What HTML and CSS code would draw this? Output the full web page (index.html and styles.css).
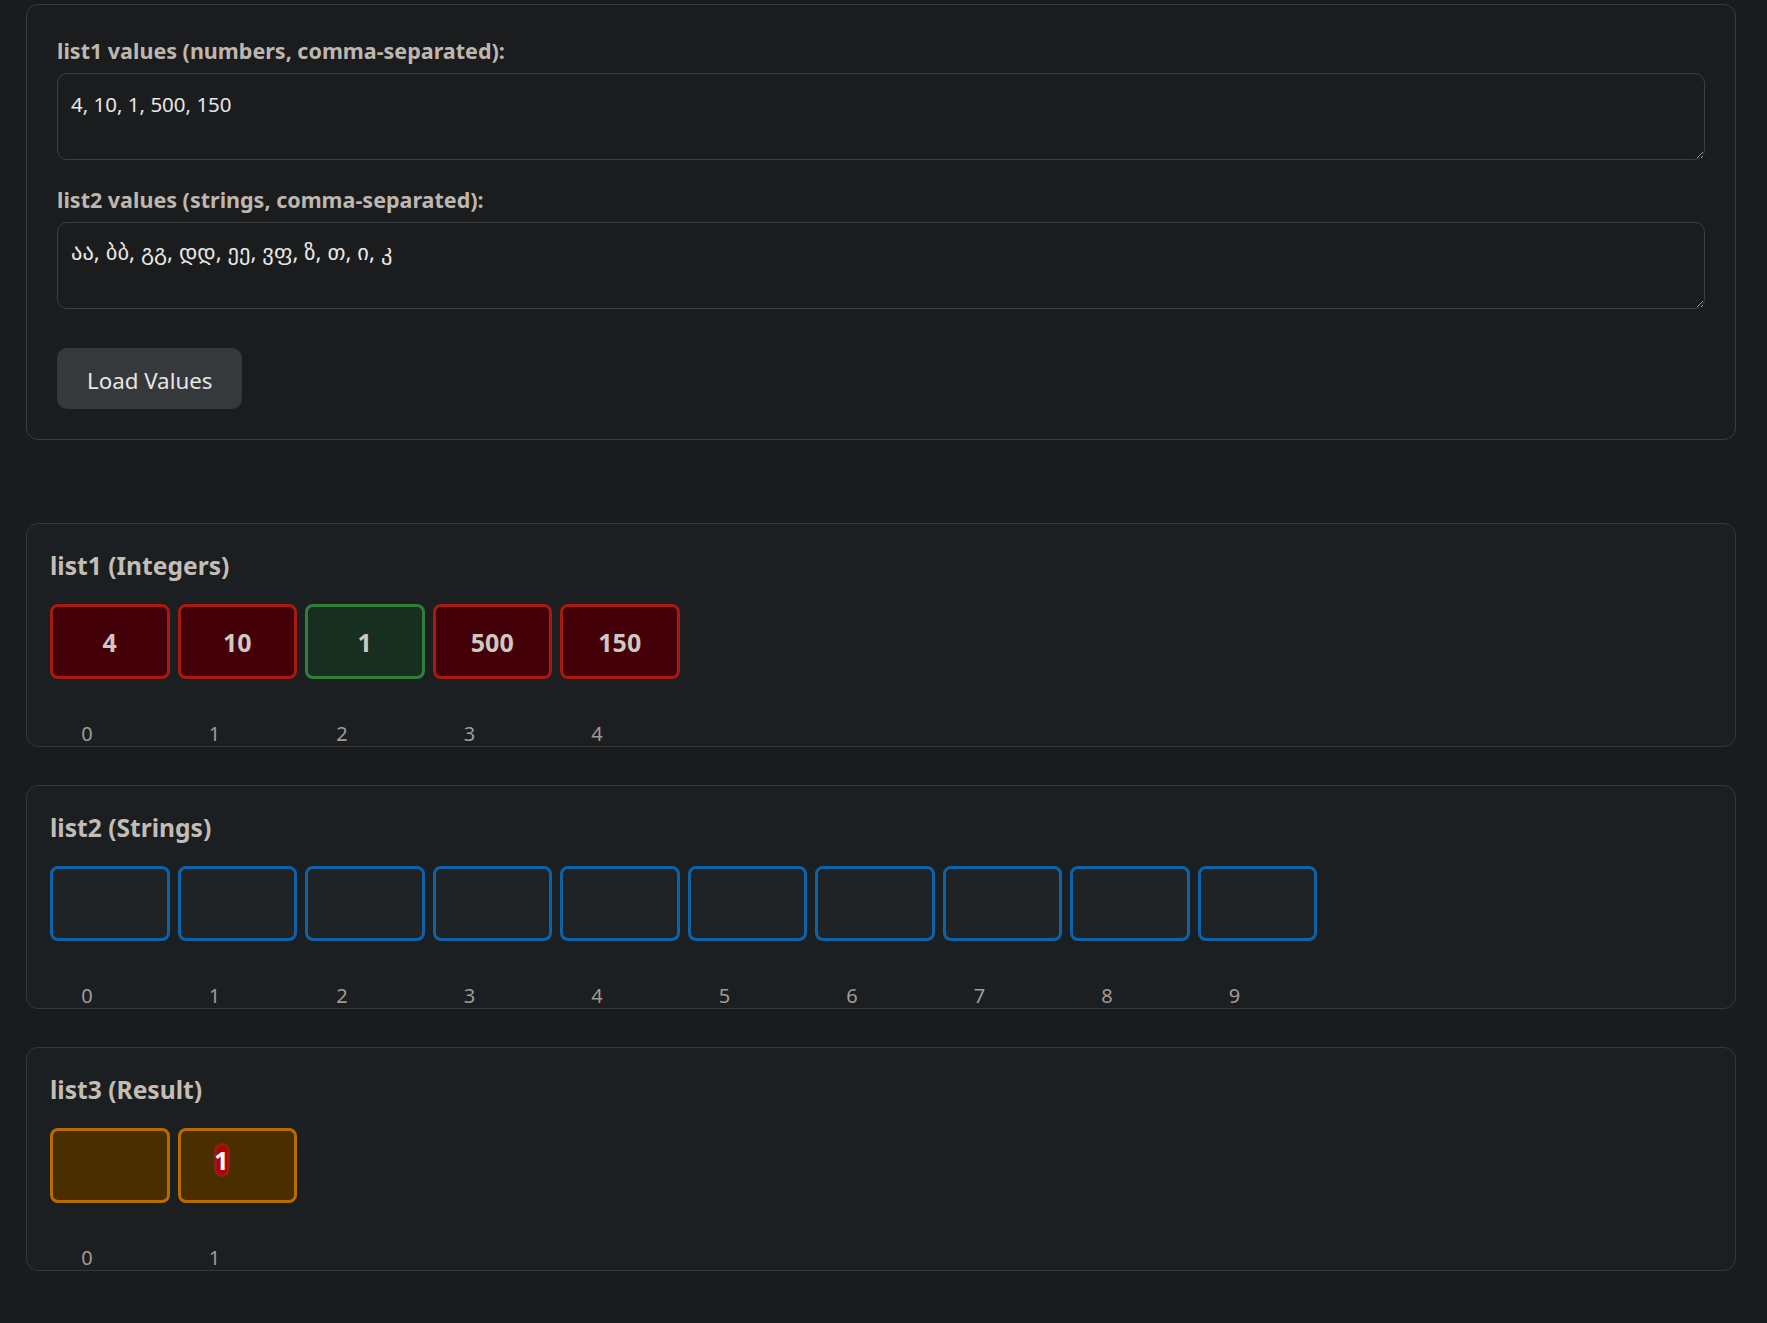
FILE: index.html
```html
<!DOCTYPE html>
<html lang="en">
<head>
<meta charset="utf-8">
<title>Lists</title>
<link rel="stylesheet" href="styles.css">
</head>
<body>
<div class="page">
  <section class="input-panel">
    <label class="field-label" for="l1">list1 values (numbers, comma-separated):</label>
    <textarea id="l1" class="field">4, 10, 1, 500, 150</textarea>
    <label class="field-label second" for="l2">list2 values (strings, comma-separated):</label>
    <textarea id="l2" class="field georgian">აა, ბბ, გგ, დდ, ეე, ვფ, ზ, თ, ი, კ</textarea>
    <button class="load-btn" type="button">Load Values</button>
  </section>

  <section class="list-panel first">
    <h5 class="list-title">list1 (Integers)</h5>
    <div class="cells">
      <div class="cell red">4</div>
      <div class="cell red">10</div>
      <div class="cell green">1</div>
      <div class="cell red">500</div>
      <div class="cell red">150</div>
    </div>
    <div class="cells idx">
      <div class="index">0</div><div class="index">1</div><div class="index">2</div><div class="index">3</div><div class="index">4</div>
    </div>
  </section>

  <section class="list-panel">
    <h5 class="list-title">list2 (Strings)</h5>
    <div class="cells">
      <div class="cell blue"></div><div class="cell blue"></div><div class="cell blue"></div><div class="cell blue"></div><div class="cell blue"></div>
      <div class="cell blue"></div><div class="cell blue"></div><div class="cell blue"></div><div class="cell blue"></div><div class="cell blue"></div>
    </div>
    <div class="cells idx">
      <div class="index">0</div><div class="index">1</div><div class="index">2</div><div class="index">3</div><div class="index">4</div>
      <div class="index">5</div><div class="index">6</div><div class="index">7</div><div class="index">8</div><div class="index">9</div>
    </div>
  </section>

  <section class="list-panel">
    <h5 class="list-title">list3 (Result)</h5>
    <div class="cells">
      <div class="cell orange"></div>
      <div class="cell orange"><span class="badge">1</span></div>
    </div>
    <div class="cells idx">
      <div class="index">0</div><div class="index">1</div>
    </div>
  </section>
</div>
</body>
</html>
```

FILE: styles.css
```css
html, body {
  margin: 0;
  padding: 0;
  background: #1a1b1d;
  color-scheme: dark;
}

body {
  font-family: "Noto Sans", "DejaVu Sans", sans-serif;
  color: #e8e6e3;
}

.page {
  width: 1710px;
  margin-left: 26px;
  padding-top: 4px;
  padding-bottom: 50px;
}

.input-panel {
  display: flex;
  flex-direction: column;
  align-items: flex-start;
  box-sizing: border-box;
  background: #1b1c1e;
  border: 1px solid #393c3f;
  border-radius: 12px;
  padding: 31px 30px 30px 30px;
}

.field-label {
  font-size: 21.5px;
  font-weight: 700;
  line-height: 30px;
  color: #bdb7af;
  margin-bottom: 7px;
}

.field-label.second {
  margin-top: 25px;
}

.field {
  box-sizing: border-box;
  width: 100%;
  height: 87px;
  background: #1b1c1e;
  border: 1px solid #3d4043;
  border-radius: 10px;
  color: #e8e6e3;
  font-family: "Noto Sans", "DejaVu Sans", sans-serif;
  font-size: 20.5px;
  line-height: 30px;
  padding: 15px 13px;
  margin: 0;
  resize: vertical;
  outline: none;
}

.field.georgian {
  font-size: 22.5px;
  padding-top: 14px;
}

.load-btn {
  margin-top: 39px;
  background: #35393c;
  border: none;
  border-radius: 10px;
  color: #e8e6e3;
  font-family: "Noto Sans", "DejaVu Sans", sans-serif;
  font-size: 22.3px;
  line-height: 31px;
  padding: 17px 30px 13px 30px;
}

.list-panel {
  box-sizing: border-box;
  background: #1c1f21;
  border: 1px solid #34383b;
  border-radius: 12px;
  padding: 27px 23px 0 23px;
  margin-top: 38px;
}

.list-panel.first {
  margin-top: 83px;
}

.list-title {
  margin: 0 0 23px 0;
  font-size: 24.6px;
  font-weight: 700;
  line-height: 30px;
  color: #c3bdb5;
}

.cells {
  display: flex;
  gap: 8px;
}

.cell {
  box-sizing: border-box;
  width: 119.5px;
  height: 74.5px;
  border: 3px solid;
  border-radius: 8px;
  display: flex;
  align-items: center;
  justify-content: center;
  font-size: 25px;
  font-weight: 700;
  color: #cdc8c1;
  padding-top: 2px;
}

.cell.red {
  background: #440008;
  border-color: #a8190f;
}

.cell.green {
  background: #172e20;
  border-color: #2f7f39;
}

.cell.blue {
  background: #1f2326;
  border-color: #0d62a8;
}

.cell.orange {
  background: #4a2e00;
  border-color: #b86c00;
}

.badge {
  box-sizing: border-box;
  width: 16px;
  height: 34px;
  border: 3px solid #8e1d1d;
  border-radius: 9px;
  background: #b40000;
  color: #ffffff;
  font-size: 25px;
  font-weight: 700;
  line-height: 28px;
  text-align: center;
  display: flex;
  justify-content: center;
  margin-right: 31.5px;
  margin-bottom: 12px;
}

.cells.idx {
  margin-top: 43.5px;
}

.index {
  box-sizing: border-box;
  width: 119.5px;
  padding-right: 45.5px;
  text-align: center;
  font-size: 20px;
  line-height: 24px;
  color: #a19b93;
}
```
